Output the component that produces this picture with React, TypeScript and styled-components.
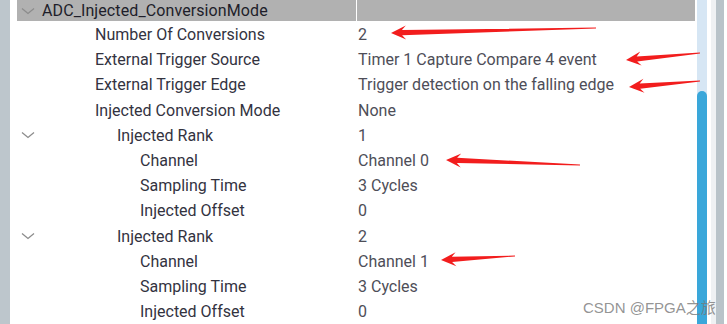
import React from "react";
import styled, { createGlobalStyle } from "styled-components";

const Global = createGlobalStyle`
  html, body { margin: 0; padding: 0; background: #ffffff; overflow: hidden; }
  body { font-family: Roboto, "Noto Sans", "Liberation Sans", sans-serif; }
`;

const Screen = styled.div`
  position: relative;
  width: 727px;
  height: 324px;
  display: flex;
  background: #ffffff;
  overflow: hidden;
`;

const LeftStrip = styled.div`
  width: 10px;
  flex: none;
  background: #bdc6cc;
  margin-right: 7px;
`;

const Tree = styled.div`
  width: 678px;
  flex: none;
  display: flex;
  flex-direction: column;
  margin-right: 2px;
`;

const HeaderRow = styled.div`
  height: 22px;
  display: grid;
  grid-template-columns: 339px 1px 1fr;
  background: #b1b1b1;
`;

const HeaderDivider = styled.div`
  background: #ffffff;
`;

const HeaderLabel = styled.div`
  position: relative;
  display: flex;
  align-items: center;
  padding-left: 25px;
  font-size: 16px;
  letter-spacing: 0.1px;
  color: #1e1e2a;
  white-space: nowrap;
`;

const Row = styled.div`
  height: 25px;
  display: grid;
  grid-template-columns: 341px 1fr;
  align-items: center;
  padding-top: 1px;
`;

const LabelCell = styled.div<{ $level: number }>`
  display: flex;
  align-items: center;
  padding-left: ${(p) => [25, 78, 100, 123][p.$level]}px;
  font-size: 16px;
  color: #33333f;
  white-space: nowrap;
  position: relative;
`;

const ValueCell = styled.div`
  font-size: 16px;
  color: #4e4e58;
  white-space: nowrap;
`;

const ChevronBox = styled.span`
  position: absolute;
  left: 4px;
  top: 50%;
  margin-top: -4px;
  width: 14px;
  height: 8px;
  display: flex;
`;

const Chevron = () => (
  <ChevronBox>
    <svg width="14" height="8" viewBox="0 0 14 8">
      <polyline
        points="1,1.5 7,6.5 13,1.5"
        fill="none"
        stroke="#8c8c8c"
        strokeWidth="1.3"
      />
    </svg>
  </ChevronBox>
);

const Scrollbar = styled.div`
  width: 10px;
  flex: none;
  background: #d6e6f4;
  display: flex;
  flex-direction: column;
  justify-content: flex-end;
`;

const Thumb = styled.div`
  height: 233px;
  background: #3aa7da;
  border-radius: 5px 5px 0 0;
`;

const Gap = styled.div`
  width: 4px;
  flex: none;
  background: #ffffff;
`;

const OuterTrack = styled.div`
  width: 5px;
  flex: none;
  background: #eff1f3;
`;

const RightStrip = styled.div`
  width: 8px;
  flex: none;
  background: #b9c3c9;
`;

const Overlay = styled.svg`
  position: absolute;
  left: 0;
  top: 0;
  pointer-events: none;
`;

const Watermark = styled.div`
  position: absolute;
  left: 583px;
  top: 296px;
  font-family: "Liberation Sans", "Noto Sans CJK SC", sans-serif;
  font-size: 15px;
  color: rgba(120, 120, 120, 0.8);
  white-space: nowrap;
`;

type Item = { label: string; value: string; level: number; expandable?: boolean };

const items: Item[] = [
  { label: "Number Of Conversions", value: "2", level: 1 },
  { label: "External Trigger Source", value: "Timer 1 Capture Compare 4 event", level: 1 },
  { label: "External Trigger Edge", value: "Trigger detection on the falling edge", level: 1 },
  { label: "Injected Conversion Mode", value: "None", level: 1 },
  { label: "Injected Rank", value: "1", level: 2, expandable: true },
  { label: "Channel", value: "Channel 0", level: 3 },
  { label: "Sampling Time", value: "3 Cycles", level: 3 },
  { label: "Injected Offset", value: "0", level: 3 },
  { label: "Injected Rank", value: "2", level: 2, expandable: true },
  { label: "Channel", value: "Channel 1", level: 3 },
  { label: "Sampling Time", value: "3 Cycles", level: 3 },
  { label: "Injected Offset", value: "0", level: 3 },
];

// arrow: tip (tx,ty), tail (ex,ey)
const arrow = (tx: number, ty: number, ex: number, ey: number) => {
  const dx = ex - tx;
  const dy = ey - ty;
  const len = Math.sqrt(dx * dx + dy * dy);
  const ux = dx / len;
  const uy = dy / len;
  const nx = -uy;
  const ny = ux;
  const hl = 15;
  const hw = 7;
  const nw = 2.6;
  const bx = tx + ux * hl;
  const by = ty + uy * hl;
  const kx = tx + ux * (hl - 4);
  const ky = ty + uy * (hl - 4);
  const pts = [
    [tx, ty],
    [bx + nx * hw, by + ny * hw],
    [kx + nx * nw, ky + ny * nw],
    [ex + nx * 0.4, ey + ny * 0.4],
    [ex - nx * 0.4, ey - ny * 0.4],
    [kx - nx * nw, ky - ny * nw],
    [bx - nx * hw, by - ny * hw],
  ];
  return pts.map((p) => `${p[0].toFixed(1)},${p[1].toFixed(1)}`).join(" ");
};

const arrows = [
  [391, 33, 596, 28],
  [626, 60, 700, 53],
  [629, 87, 700, 81],
  [446, 160, 580, 165],
  [441, 260, 515, 256],
];

export default function App() {
  return (
    <>
      <Global />
      <Screen>
        <LeftStrip />
        <Tree>
          <HeaderRow>
            <HeaderLabel>
              <Chevron />
              ADC_Injected_ConversionMode
            </HeaderLabel>
            <HeaderDivider />
            <div />
          </HeaderRow>
          {items.map((it, i) => (
            <Row key={i}>
              <LabelCell $level={it.level}>
                {it.expandable && <Chevron />}
                {it.label}
              </LabelCell>
              <ValueCell>{it.value}</ValueCell>
            </Row>
          ))}
        </Tree>
        <Scrollbar>
          <Thumb />
        </Scrollbar>
        <Gap />
        <OuterTrack />
        <RightStrip />
        <Overlay width="727" height="324" viewBox="0 0 727 324">
          {arrows.map((a, i) => (
            <polygon key={i} points={arrow(a[0], a[1], a[2], a[3])} fill="#f21d1d" />
          ))}
        </Overlay>
        <Watermark>CSDN @FPGA之旅</Watermark>
      </Screen>
    </>
  );
}
